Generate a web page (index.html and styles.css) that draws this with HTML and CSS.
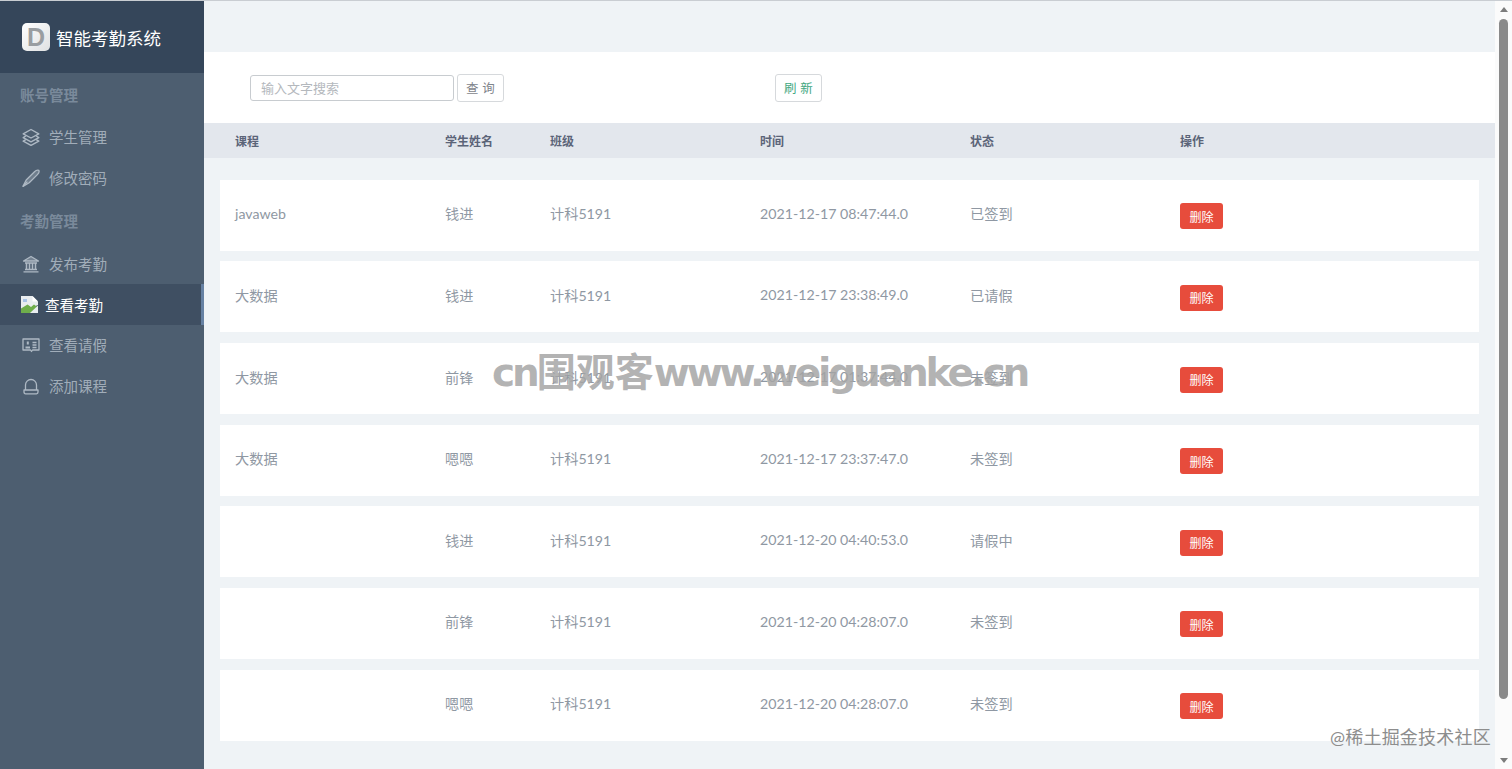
FILE: index.html
```html
<!DOCTYPE html>
<html lang="zh-CN">
<head>
<meta charset="UTF-8">
<meta name="viewport" content="width=device-width, initial-scale=1.0">
<title>智能考勤系统</title>
<link rel="stylesheet" href="styles.css">
</head>
<body>
    <div class="page">
        <aside class="sidebar">
            <div class="brand">
                <span class="logo">D</span>
                <span class="brand-name">智能考勤系统</span>
            </div>
            <p class="nav-title">账号管理</p>
            <a class="nav-item">
                <svg class="nav-icon" viewBox="0 0 18 18" fill="none" stroke="currentColor" stroke-width="1.4" stroke-linejoin="round">
                    <path d="M9 1.5 16.8 5.8 9 10 1.2 5.8Z"/>
                    <path d="M3.8 8 1.2 9.6 9 13.8 16.8 9.6 14.2 8"/>
                    <path d="M3.8 11.7 1.2 13.2 9 17.4 16.8 13.2 14.2 11.7"/>
                </svg>
                学生管理
            </a>
            <a class="nav-item">
                <svg class="nav-icon" viewBox="0 0 18 18" fill="none" stroke="currentColor" stroke-width="1.3" stroke-linejoin="round">
                    <path d="M1 17.4 4.2 11 12.5 2.8C13.9 1.4 15.8 1 16.9 1.4 17.4 2.6 16.6 4.4 15.4 5.6L7.2 13.8Z" fill="currentColor" fill-opacity="0.35"/>
                    <path d="M1 17.4 5.4 12.6"/>
                </svg>
                修改密码
            </a>
            <p class="nav-title">考勤管理</p>
            <a class="nav-item">
                <svg class="nav-icon" viewBox="0 0 18 18" fill="none" stroke="currentColor" stroke-width="1.3" stroke-linejoin="round">
                    <path d="M9 1.5 16.5 6H1.5Z" fill="currentColor" fill-opacity="0.4"/>
                    <path d="M3 8H15M3 14.5H15M1.5 16.8H16.5"/>
                    <path d="M4.5 8V14.5M7.5 8V14.5M10.5 8V14.5M13.5 8V14.5" stroke-width="1.5"/>
                </svg>
                发布考勤
            </a>
            <a class="nav-item nav-active">
                <svg class="broken-icon" viewBox="0 0 17 17">
                    <path d="M0 0H11.5L17 5.5V9L0 16Z" fill="#e9edf0"/>
                    <path d="M11.5 0 17 5.5H11.5Z" fill="#ffffff"/>
                    <path d="M2 3H6V6H2Z" fill="#a9c4e8"/>
                    <path d="M0 17V12.5L6.5 8.5 10 11 13 8.5 17 11.5V17Z" fill="#6fae4b"/>
                    <path d="M9 17 17 9.5V17Z" fill="#e9edf0"/>
                </svg>
                查看考勤
            </a>
            <a class="nav-item">
                <svg class="nav-icon" viewBox="0 0 18 18" fill="none" stroke="currentColor" stroke-width="1.3" stroke-linejoin="round">
                    <path d="M1 3H17V14H10.5L9.5 15.5 8.5 14H1Z"/>
                    <path d="M10.5 6.5H14.5M10.5 9H14.5M10.5 11.5H14.5"/>
                    <path d="M3.5 11.5H8M5.8 5.5V8.5" stroke-width="2"/>
                </svg>
                查看请假
            </a>
            <a class="nav-item">
                <svg class="nav-icon" viewBox="0 0 18 18" fill="none" stroke="currentColor" stroke-width="1.3" stroke-linejoin="round">
                    <path d="M3.5 13V8A5.5 5.5 0 0 1 14.5 8V13"/>
                    <path d="M2 13H16V15C16 16 15.4 16.8 14.5 16.8H3.5C2.6 16.8 2 16 2 15Z"/>
                </svg>
                添加课程
            </a>
        </aside>

        <main class="content">
            <div class="toolbar">
                <input class="search-input" type="text" placeholder="输入文字搜索">
                <button class="btn">查 询</button>
                <button class="btn btn-refresh">刷 新</button>
            </div>
            <div class="grid table-head">
                <span>课程</span>
                <span>学生姓名</span>
                <span>班级</span>
                <span>时间</span>
                <span>状态</span>
                <span>操作</span>
            </div>
            <div class="rows">
                <div class="grid row">
                    <span>javaweb</span><span>钱进</span><span>计科5191</span><span>2021-12-17 08:47:44.0</span><span>已签到</span>
                    <span><button class="btn-del">删除</button></span>
                </div>
                <div class="grid row">
                    <span>大数据</span><span>钱进</span><span>计科5191</span><span>2021-12-17 23:38:49.0</span><span>已请假</span>
                    <span><button class="btn-del">删除</button></span>
                </div>
                <div class="grid row">
                    <span>大数据</span><span>前锋</span><span>计科5191</span><span>2021-12-17 01:37:44.0</span><span>未签到</span>
                    <span><button class="btn-del">删除</button></span>
                </div>
                <div class="grid row">
                    <span>大数据</span><span>嗯嗯</span><span>计科5191</span><span>2021-12-17 23:37:47.0</span><span>未签到</span>
                    <span><button class="btn-del">删除</button></span>
                </div>
                <div class="grid row">
                    <span></span><span>钱进</span><span>计科5191</span><span>2021-12-20 04:40:53.0</span><span>请假中</span>
                    <span><button class="btn-del">删除</button></span>
                </div>
                <div class="grid row">
                    <span></span><span>前锋</span><span>计科5191</span><span>2021-12-20 04:28:07.0</span><span>未签到</span>
                    <span><button class="btn-del">删除</button></span>
                </div>
                <div class="grid row">
                    <span></span><span>嗯嗯</span><span>计科5191</span><span>2021-12-20 04:28:07.0</span><span>未签到</span>
                    <span><button class="btn-del">删除</button></span>
                </div>
            </div>
        </main>

        <div class="scrollbar">
            <span class="arrow-up"></span>
            <span class="thumb"></span>
            <span class="arrow-down"></span>
        </div>
    </div>

    <div class="mark-center">cn<span class="mark-cjk">围观客</span>www.weiguanke.cn</div>
    <div class="mark-corner">@稀土掘金技术社区</div>
</body>
</html>
```

FILE: styles.css
```css
* {
  box-sizing: border-box;
}

html, body {
  margin: 0;
  height: 100%;
  overflow: hidden;
}

body {
  font-family: "Lato", "Noto Sans CJK SC", sans-serif;
  font-size: 14.2px;
  color: #8f98a3;
  background-color: #eff3f6;
}

.page {
  display: flex;
  height: 769px;
  border-top: 1px solid #c9cdd2;
}

/* sidebar */
.sidebar {
  width: 204px;
  flex-shrink: 0;
  background-color: #4d5e70;
}

.brand {
  display: flex;
  align-items: center;
  gap: 6px;
  height: 72px;
  padding-left: 22px;
  background-color: #35465a;
}

.logo {
  width: 28px;
  height: 28px;
  border-radius: 5px;
  background: linear-gradient(135deg, #ffffff, #dfe1e2);
  color: #9a9ea1;
  font-family: "Liberation Sans", sans-serif;
  font-size: 25px;
  font-weight: bold;
  line-height: 28px;
  text-align: center;
}

.brand-name {
  color: #ffffff;
  font-size: 17.5px;
}

.nav-title {
  margin: 0;
  height: 43px;
  padding-left: 20px;
  line-height: 46px;
  font-size: 14.5px;
  font-weight: bold;
  color: #7a8a9b;
}

.nav-item + .nav-title {
  height: 44px;
  margin-top: 1px;
}

.nav-item {
  display: flex;
  align-items: center;
  gap: 9px;
  height: 41px;
  padding-left: 22px;
  font-size: 14.5px;
  color: #a1adb9;
}

.nav-active + .nav-item {
  margin-top: -1px;
}

.nav-icon {
  width: 18px;
  height: 18px;
  flex-shrink: 0;
  color: #aeb9c4;
}

.nav-active {
  gap: 7px;
  padding-left: 21px;
  color: #ffffff;
  background-color: #3f4f62;
  border-right: 3px solid #6681a3;
}

.broken-icon {
  width: 17px;
  height: 17px;
  flex-shrink: 0;
}

/* main */
.content {
  flex: 1;
  padding-top: 51px;
  min-width: 0;
}

.toolbar {
  display: flex;
  align-items: center;
  gap: 3px;
  height: 71px;
  padding-left: 46px;
  background-color: #ffffff;
}

.search-input {
  width: 204px;
  height: 26px;
  padding: 0 10px;
  border: 1px solid #c8ccd0;
  border-radius: 3px;
  font-family: inherit;
  font-size: 13px;
}

.search-input::placeholder {
  color: #b4b8bd;
}

.btn {
  width: 47px;
  height: 28px;
  padding: 0;
  border: 1px solid #d6d9dc;
  border-radius: 3px;
  background-color: #ffffff;
  color: #7f858c;
  font-family: inherit;
  font-size: 12.5px;
  letter-spacing: 0.3px;
}

.btn-refresh {
  margin-left: 268px;
  color: #3fa77f;
}

.grid {
  display: grid;
  grid-template-columns: 210px 105px 210px 210px 210px 1fr;
  align-items: center;
}

.table-head {
  height: 35px;
  padding-left: 31px;
  background-color: #e3e7ed;
  color: #5b6478;
  font-size: 12px;
  font-weight: bold;
}

.rows {
  display: flex;
  flex-direction: column;
  gap: 10.67px;
  padding: 21.7px 16px 0;
}

.row {
  height: 71px;
  padding: 0 0 4px 15px;
  background-color: #ffffff;
}

.btn-del {
  display: block;
  width: 43px;
  height: 26px;
  margin-top: 6px;
  padding: 0;
  border: none;
  border-radius: 3px;
  background-color: #e74c3c;
  color: #ffffff;
  font-family: inherit;
  font-size: 12px;
}

/* scrollbar */
.scrollbar {
  display: flex;
  flex-direction: column;
  align-items: center;
  width: 17px;
  flex-shrink: 0;
  padding: 6px 0;
  background-color: #fbfbfb;
}

.arrow-up, .arrow-down {
  width: 0;
  height: 0;
  border-left: 4px solid transparent;
  border-right: 4px solid transparent;
}

.arrow-up {
  border-bottom: 5px solid #7c7c7c;
}

.arrow-down {
  margin-top: auto;
  border-top: 5px solid #7c7c7c;
}

.thumb {
  width: 9px;
  height: 680px;
  margin-top: 7px;
  border-radius: 5px;
  background-color: #8a8a8a;
}

/* watermarks */
.mark-center {
  position: absolute;
  left: 492px;
  top: 347px;
  color: rgba(165, 165, 165, 0.85);
  font-family: "DejaVu Sans", "Noto Sans CJK SC", sans-serif;
  font-size: 39px;
  font-weight: bold;
  letter-spacing: -3.1px;
  line-height: 52px;
  white-space: nowrap;
}

.mark-cjk {
  letter-spacing: 0;
}

.mark-corner {
  position: absolute;
  left: 1330px;
  top: 725px;
  color: #8d8d8d;
  font-size: 18px;
  letter-spacing: 0.2px;
  line-height: 24px;
  white-space: nowrap;
}
```
